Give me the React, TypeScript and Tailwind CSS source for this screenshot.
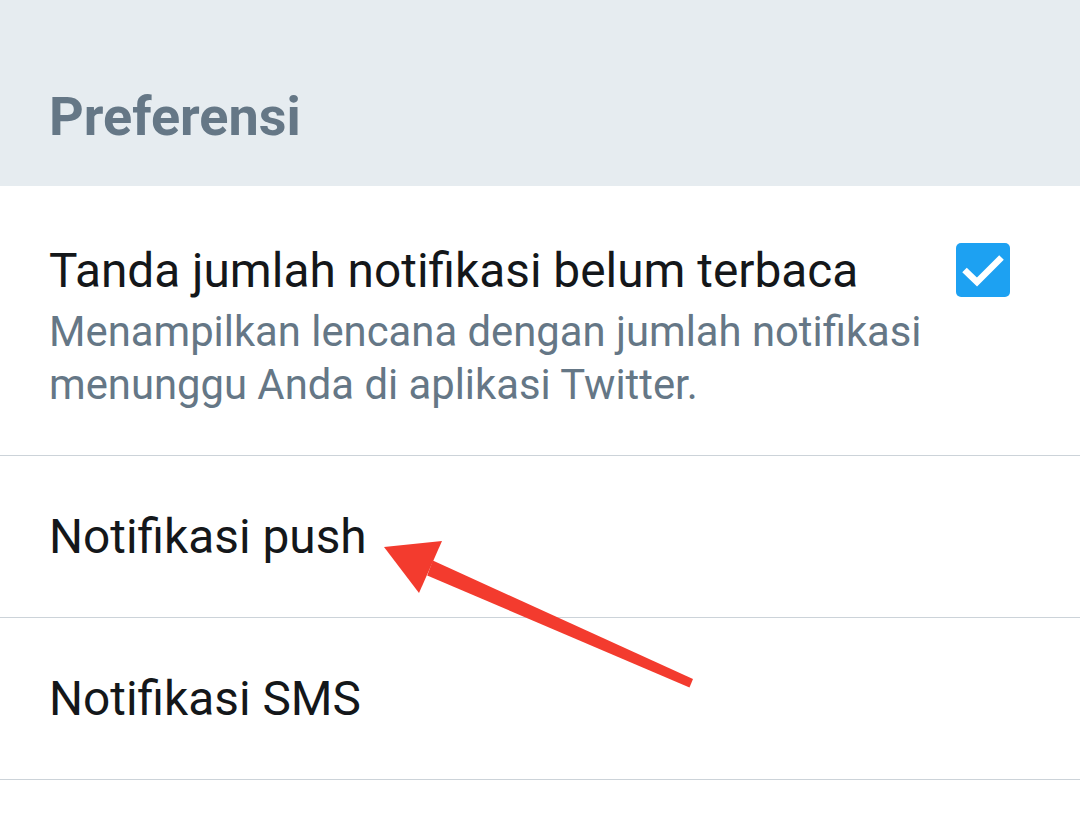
import React from 'react';

const font = { fontFamily: 'Roboto, "Noto Sans", sans-serif' };

const CheckBox: React.FC = () => (
  <div className="w-[54px] h-[54px] rounded-[5px] bg-[#1da1f2] flex-shrink-0 flex items-center justify-center">
    <svg width="54" height="54" viewBox="0 0 54 54" fill="none">
      <path d="M8.5 27 L21 39 L45.5 14.5" stroke="#ffffff" strokeWidth="6.5" strokeLinejoin="miter" />
    </svg>
  </div>
);

export default function App() {
  return (
    <div className="relative w-[1080px] h-[814px] bg-white overflow-hidden" style={font}>
      {/* Section header */}
      <div className="h-[186px] bg-[#e6ecf0] pl-[49px] pt-[90px]">
        <h2 className="text-[54px] leading-none font-bold text-[#657786]">Preferensi</h2>
      </div>

      {/* Badge count row */}
      <div className="flex items-start gap-[27px] pl-[49px] pr-[70px] pt-[57px] pb-[44px] border-b border-[#ccd3d9]">
        <div className="flex-1">
          <div className="text-[47.8px] leading-[56px] text-[#14171a]">Tanda jumlah notifikasi belum terbaca</div>
          <p className="mt-[6px] text-[41.8px] leading-[53px] text-[#657786]">
            Menampilkan lencana dengan jumlah notifikasi menunggu Anda di aplikasi Twitter.
          </p>
        </div>
        <CheckBox />
      </div>

      <div className="h-[162px] flex items-center pl-[49px] border-b border-[#ccd3d9]">
        <span className="text-[47.8px] leading-[56px] text-[#14171a]">Notifikasi push</span>
      </div>

      <div className="h-[162px] flex items-center pl-[49px] border-b border-[#ccd3d9]">
        <span className="text-[47.8px] leading-[56px] text-[#14171a]">Notifikasi SMS</span>
      </div>

      {/* Annotation arrow */}
      <svg className="absolute left-0 top-0 pointer-events-none" width="1080" height="814" viewBox="0 0 1080 814">
        <polygon
          points="693,679 689.5,687.5 427.2,575.4 432.8,560.6"
          fill="#f33b2e"
        />
        <polygon points="384,547 442,541 419,593" fill="#f33b2e" />
      </svg>
    </div>
  );
}
